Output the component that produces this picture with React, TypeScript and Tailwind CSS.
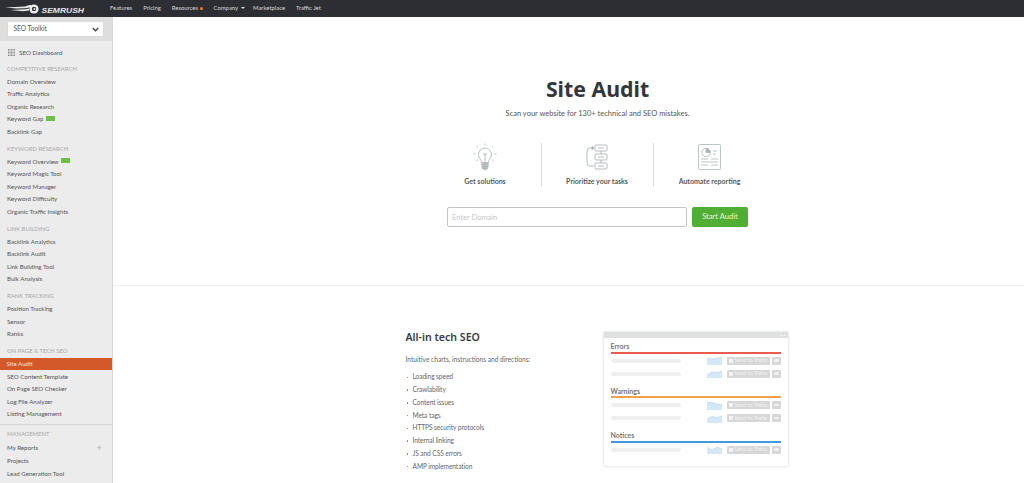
import React from "react";

const Section = ({ title }: { title: string }) => (
  <div className="h-[12.5px] whitespace-nowrap pl-[7px] text-[5.900px] leading-[12.5px] text-[#a8a8a8]">{title}</div>
);
const Badge = () => (
  <span className="mb-[1px] ml-[2px] inline-block h-[5px] w-[9.5px] bg-[#6cc04a]" />
);
type It = { label: string; badge?: boolean; active?: boolean; plus?: boolean; tall?: boolean };
const Item = ({ label, badge, active, plus, tall }: It) => (
  <div className={`flex items-center whitespace-nowrap pr-[10px] text-[6.150px] ${tall ? "h-[13.3px]" : "h-[12.5px]"} ${active ? "bg-[#d3582a] pl-[6.500px] text-[#f8e4dc]" : "pl-[7px] text-[#555555]"}`}>
    <span>{label}</span>
    {badge && <Badge />}
    {plus && <span className="ml-auto text-[9px] leading-none text-[#aaaaaa]">+</span>}
  </div>
);

const Group = ({ title, items, mt = "mt-[5px]" }: { title: string; items: (string | It)[]; mt?: string }) => (
  <div className={mt}>
    <Section title={title} />
    {items.map((i) => (typeof i === "string" ? <Item key={i} label={i} /> : <Item key={i.label} {...i} />))}
  </div>
);

const Logo = () => (
  <svg width="80" height="12" viewBox="0 0 80 12" className="shrink-0">
    <path d="M0 4.500 L20 3.600 C22 2.500 24 2 26 2 L26 4.200 L20 5.200 L12 5.600 Z" fill="#e8e8e8" />
    <path d="M5 7 L20 6.200 L24 5.600 L24 7.600 L18 8.200 Z" fill="#e8e8e8" />
    <circle cx="29" cy="6" r="4.600" fill="#eeeeee" />
    <circle cx="29" cy="6" r="2.200" fill="#2c2e33" />
    <circle cx="29.400" cy="6" r="1" fill="#eeeeee" />
    <text x="36.500" y="9.500" textLength="42.500" lengthAdjust="spacingAndGlyphs" fontFamily="'Liberation Sans', sans-serif" fontWeight="700" fontStyle="italic" fontSize="8" fill="#e8e8e8">SEMRUSH</text>
  </svg>
);

const Bulb = () => (
  <svg width="24" height="28" viewBox="0 0 24 28" fill="none" stroke="#9aa5a8" strokeWidth="0.7">
    <path d="M8.600 19.500c0-3-3.100-4-3.100-8a6.500 6.500 0 0 1 13 0c0 4-3.100 5-3.100 8z" />
    <path d="M10 11h4M12 11v8" />
    <path d="M8.800 20h6.400v3.600a3.200 3.200 0 0 1-6.400 0z" fill="#b4bdbf" stroke="#b4bdbf" />
    <path d="M12 .5v2M3.700 3l1.400 1.400M20.300 3l-1.400 1.400M.5 11h2M21.500 11h2M3.500 18l1.500-1.200M20.500 18L19 16.800" />
  </svg>
);
const Flow = () => (
  <svg width="22" height="26" viewBox="0 0 22 26" fill="none" stroke="#a3adb0" strokeWidth="0.8">
    <rect x="9" y="1" width="12" height="6" rx="1" />
    <rect x="9" y="10" width="12" height="6" rx="1" />
    <rect x="9" y="19" width="12" height="6" rx="1" />
    <path d="M12 4h6M12 13h6M12 22h6M15 7v3M15 16v3" />
    <path d="M8 22H4a3 3 0 0 1-3-3V7a3 3 0 0 1 3-3h3" />
    <path d="M6 2.500l2 1.500-2 1.500z" fill="#a3adb0" />
  </svg>
);
const Report = () => (
  <svg width="23" height="26" viewBox="0 0 23 26" fill="none" stroke="#acb5b8" strokeWidth="0.8">
    <rect x=".5" y=".5" width="22" height="25" rx="1" />
    <circle cx="8" cy="8.500" r="4.200" />
    <path d="M8 8.500V4.300a4.200 4.200 0 0 1 4.200 4.200z" fill="#acb5b8" />
    <path d="M15 7h4M15 10h3M3 15h7M13 15h7M3 18h17M3 21h7M13 21h7" />
  </svg>
);

const Feature = ({ icon, label, border }: { icon: React.ReactNode; label: string; border?: boolean }) => (
  <div className={`flex h-[43px] w-[112px] flex-col items-center justify-between ${border ? "border-r border-[#dcdcdc]" : ""}`}>
    <div className="flex h-[28px] items-center justify-center">{icon}</div>
    <div className="whitespace-nowrap text-[7px] font-bold leading-[10px] text-[#555b5e]">{label}</div>
  </div>
);

const Spark = ({ d }: { d: string }) => (
  <svg width="15" height="9" viewBox="0 0 15 9" className="shrink-0">
    <path d={`${d} L15 9 L0 9 Z`} fill="#d5e8f6" />
    <path d={d} fill="none" stroke="#a5cdea" strokeWidth="0.5" />
  </svg>
);
const CardRow = ({ d }: { d: string }) => (
  <div className="flex h-[8px] items-center">
    <div className="h-[4px] w-[72px] rounded-full bg-[#efefef]" />
    <div className="ml-[25.500px]"><Spark d={d} /></div>
    <div className="ml-[5px] flex h-[8px] w-[44px] items-center justify-center gap-[1px] whitespace-nowrap rounded-[1px] bg-[#d7d7d7] text-[5.500px] text-[#f3f3f3]">
      <span className="inline-block h-[4px] w-[4px] bg-[#f3f3f3]" />
      Send to Trello
    </div>
    <div className="ml-[2px] flex h-[8px] w-[9px] items-center justify-center rounded-[1px] bg-[#d7d7d7]">
      <span className="block h-[2.500px] w-[5px] rounded-full bg-[#f3f3f3]" />
    </div>
  </div>
);
const CardGroup = ({ title, color, rows }: { title: string; color: string; rows: string[] }) => (
  <div>
    <div className="h-[10.500px] text-[7px] font-bold leading-[10px] text-[#777777]">{title}</div>
    <div className={`h-[2px] ${color}`} />
    <div className="mt-[3px] flex flex-col gap-[5px]">
      {rows.map((d) => <CardRow key={d} d={d} />)}
    </div>
  </div>
);

export default function App() {
  return (
    <div className="flex h-[483px] w-[1024px] flex-col overflow-hidden bg-white font-['Lato','Open_Sans',sans-serif]">
      <header className="flex h-[17px] shrink-0 items-center bg-[#2c2e33] pl-[5px] text-[5.900px] text-[#d8d8d8]">
        <Logo />
        <nav className="ml-[25px] flex items-center gap-[11px] whitespace-nowrap">
          <span>Features</span>
          <span>Pricing</span>
          <span className="flex items-center gap-[2px]">Resources <span className="h-[2.500px] w-[2.500px] rounded-full bg-[#ff7a1a]" /></span>
          <span className="flex items-center gap-[3px]">Company <span className="h-0 w-0 border-x-[2px] border-t-[2px] border-x-transparent border-t-[#e0e0e0]" /></span>
          <span className="ml-[-3px]">Marketplace</span>
          <span>Traffic Jet</span>
        </nav>
      </header>
      <div className="flex min-h-0 flex-1">
        <aside className="w-[113px] shrink-0 overflow-hidden border-r border-[#d8d8d8] bg-[#ececec]">
          <div className="flex h-[24px] items-center bg-[#dedede] pl-[7.500px]">
            <div className="flex h-[14px] w-[95px] items-center justify-between rounded-[1px] bg-white pl-[6px] pr-[4px] text-[6.600px] text-[#555555] shadow-[0_0_1px_#bbbbbb]">
              SEO Toolkit
              <svg width="7" height="5" viewBox="0 0 7 5" fill="none" stroke="#444444" strokeWidth="1.300"><path d="M.7 1l2.800 2.800L6.300 1" /></svg>
            </div>
          </div>
          <div className="mt-[5px] flex h-[12.500px] items-center gap-[4.500px] pl-[7.500px] text-[6.300px] text-[#555555]">
            <svg width="7" height="7" viewBox="0 0 7 7" fill="#888888">
              {[0, 1.500, 3, 4.500, 6].flatMap((x) => [0, 1.500, 3, 4.500, 6].map((y) => <rect key={`${x}-${y}`} x={x} y={y} width="1" height="1" />))}
            </svg>
            SEO Dashboard
          </div>
          <Group title="COMPETITIVE RESEARCH" mt="mt-[4.200px]" items={["Domain Overview", "Traffic Analytics", "Organic Research", { label: "Keyword Gap", badge: true }, "Backlink Gap"]} />
          <Group title="KEYWORD RESEARCH" items={[{ label: "Keyword Overview", badge: true }, "Keyword Magic Tool", "Keyword Manager", "Keyword Difficulty", "Organic Traffic Insights"]} />
          <Group title="LINK BUILDING" items={["Backlink Analytics", "Backlink Audit", "Link Building Tool", "Bulk Analysis"]} />
          <Group title="RANK TRACKING" items={["Position Tracking", "Sensor", "Ranks"]} />
          <Group title="ON PAGE & TECH SEO" items={[{ label: "Site Audit", active: true }, "SEO Content Template", "On Page SEO Checker", "Log File Analyzer", "Listing Management"]} />
          <div className="mt-[4px] border-t border-[#d6d6d6]" />
          <Group title="MANAGEMENT" mt="mt-[3px]" items={[{ label: "My Reports", plus: true, tall: true }, { label: "Projects", tall: true }, { label: "Lead Generation Tool", tall: true }]} />
        </aside>
        <main className="min-w-0 flex-1">
          <section className="flex h-[269px] flex-col items-center border-b border-[#efefef] pl-[58px]">
            <h1 className="mt-[56px] font-['Noto_Sans',sans-serif] text-[21.300px] font-bold leading-[32px] text-[#33363a]">Site Audit</h1>
            <p className="mt-[3px] text-[7.500px] leading-[12px] text-[#555555]">Scan your website for 130+ technical and SEO mistakes.</p>
            <div className="mt-[23px] flex">
              <Feature icon={<Bulb />} label="Get solutions" border />
              <Feature icon={<Flow />} label="Prioritize your tasks" border />
              <Feature icon={<Report />} label="Automate reporting" />
            </div>
            <div className="mt-[21px] flex gap-[5px]">
              <input placeholder="Enter Domain" className="h-[20px] w-[240px] rounded-[2px] border border-[#c4c4c4] bg-white px-[4px] text-[7.500px] outline-none placeholder:text-[#c8c8c8]" />
              <button className="h-[20px] w-[56px] rounded-[2px] bg-[#4fae33] text-[7.600px] text-[#e6f5e0]">Start Audit</button>
            </div>
          </section>
          <section className="flex pl-[292.500px] pt-[44px]">
            <div className="w-[197px]">
              <h2 className="font-['Noto_Sans',sans-serif] text-[10.600px] font-semibold leading-[14px] text-[#3a3d40]">All-in tech SEO</h2>
              <p className="mt-[10px] text-[6.600px] leading-[10px] text-[#666666]">Intuitive charts, instructions and directions:</p>
              <ul className="mt-[7px]">
                {["Loading speed", "Crawlability", "Content issues", "Meta tags", "HTTPS security protocols", "Internal linking", "JS and CSS errors", "AMP implementation"].map((t) => (
                  <li key={t} className="flex h-[12.750px] items-center text-[6.600px] tracking-[-0.08px] text-[#666666]">
                    <span className="ml-[1px] mr-[4.500px] h-[1.500px] w-[1.500px] rounded-full bg-[#777777]" />
                    {t}
                  </li>
                ))}
              </ul>
            </div>
            <div className="mt-[1px] h-[136px] w-[186px] overflow-hidden rounded-[2px] border border-[#eeeeee] bg-white shadow-[0_0_2px_#e8e8e8]">
              <div className="flex h-[6px] items-center justify-end gap-[1px] bg-[#dfe1e1] pr-[3px]">
                <span className="h-[1px] w-[1px] bg-white" /><span className="h-[1px] w-[1px] bg-white" /><span className="h-[1px] w-[1px] bg-white" />
              </div>
              <div className="flex flex-col gap-[8px] px-[7px] pt-[3px]">
                <CardGroup title="Errors" color="bg-[#ea5a4e]" rows={["M0 2 L5 3 L10 2.500 L15 1", "M0 6 L5 3 L10 3.500 L15 2"]} />
                <CardGroup title="Warnings" color="bg-[#f5a04d]" rows={["M0 1 L5 1.500 L10 3 L15 3.500", "M0 5 L5 2.500 L10 3.500 L15 2"]} />
                <CardGroup title="Notices" color="bg-[#3f9ae4]" rows={["M0 2 L5 5 L10 2 L15 4"]} />
              </div>
            </div>
          </section>
        </main>
      </div>
    </div>
  );
}
